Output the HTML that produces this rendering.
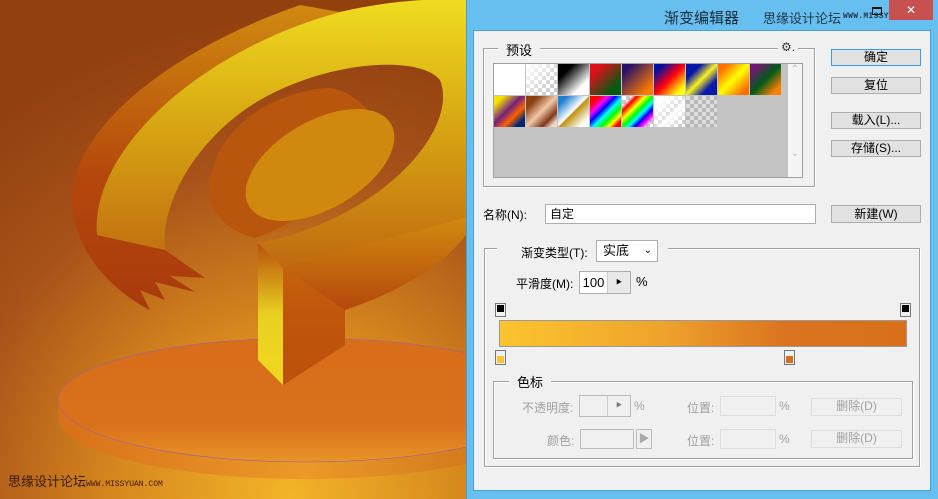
<!DOCTYPE html>
<html><head><meta charset="utf-8">
<style>
*{margin:0;padding:0;box-sizing:border-box}
body{width:938px;height:499px;overflow:hidden;position:relative;font-family:"Liberation Sans","Noto Sans CJK SC",sans-serif;font-size:12px;color:#000;background:#67bff0}
.a{position:absolute}
.btn{position:absolute;background:#e1e1e1;border:1px solid #adadad;text-align:center;line-height:15px;font-size:12px}
.grp{position:absolute;border:1px solid #a0a0a0;box-shadow:inset 1px 1px 0 #fff,1px 1px 0 #fff}
.lbl{position:absolute;background:#f0f0f0;padding:0 8px;font-size:12px}
.sw{position:absolute;width:31px;height:31px}
.chk{background-color:#fff;background-image:linear-gradient(45deg,#ccc 25%,transparent 25%,transparent 75%,#ccc 75%),linear-gradient(45deg,#ccc 25%,transparent 25%,transparent 75%,#ccc 75%);background-size:8px 8px;background-position:0 0,4px 4px}
.dis{color:#a0a0a0}
</style></head><body>
<svg class="a" style="left:0;top:0" width="466" height="499" viewBox="0 0 466 499">
<defs>
<radialGradient id="bg" cx="290" cy="500" r="480" gradientUnits="userSpaceOnUse">
<stop offset="0" stop-color="#f3b428"/><stop offset="0.35" stop-color="#d88a1e"/><stop offset="0.7" stop-color="#a8521a"/><stop offset="1" stop-color="#93400f"/></radialGradient>
<linearGradient id="ring" x1="0" y1="0" x2="0" y2="1"><stop offset="0" stop-color="#f0dc20"/><stop offset="0.45" stop-color="#d8a812"/><stop offset="1" stop-color="#c06a10"/></linearGradient>
<linearGradient id="side" x1="0" y1="0" x2="0" y2="1"><stop offset="0" stop-color="#d08a10"/><stop offset="0.55" stop-color="#b5480c"/><stop offset="1" stop-color="#a83a0c"/></linearGradient>
<linearGradient id="base" x1="0" y1="0" x2="1" y2="0"><stop offset="0" stop-color="#d8701a"/><stop offset="0.5" stop-color="#eb9a28"/><stop offset="1" stop-color="#c86a18"/></linearGradient>
<linearGradient id="btop" x1="0" y1="0" x2="0" y2="1"><stop offset="0" stop-color="#d86e1a"/><stop offset="0.7" stop-color="#d9701a"/><stop offset="1" stop-color="#e89428"/></linearGradient>
<linearGradient id="post" x1="0" y1="0" x2="0" y2="1"><stop offset="0" stop-color="#b8500c"/><stop offset="0.5" stop-color="#e8d020"/><stop offset="1" stop-color="#f0d820"/></linearGradient>
</defs>
<rect width="466" height="499" fill="url(#bg)"/>
<ellipse cx="305" cy="417" rx="247" ry="62" fill="url(#base)"/>
<rect x="58" y="400" width="408" height="17" fill="url(#base)"/>
<ellipse cx="305" cy="400" rx="247" ry="62" fill="url(#btop)" stroke="#a060a0" stroke-width="0.6"/>
<path d="M97 235 C90 150 200 50 340 12 L300 5 C170 50 68 130 72 205 C75 250 110 290 150 310 L140 290 L165 300 L155 282 L195 292 L170 276 L205 278 L165 250 Z" fill="url(#side)"/>
<path d="M282 267 L466 217 L466 235 C440 270 390 295 345 310 L345 345 L283 385 Z" fill="url(#side)"/>
<path d="M210 180 C220 120 280 92 325 88 C345 88 360 100 375 118 C360 170 310 220 255 238 C225 230 205 210 210 180 Z" fill="#b8560e"/>
<ellipse cx="320" cy="165" rx="82" ry="44" transform="rotate(-30 320 165)" fill="#d0880e"/>
<path fill-rule="evenodd" fill="url(#ring)" d="M97 235 C90 150 200 50 340 12 C390 0 440 -2 466 0 L466 217 L282 267 L258 243 C380 220 460 130 440 80 C420 55 330 60 260 100 C200 135 160 200 165 250 Z"/>
<path d="M258 243 L283 268 L283 385 L258 360 Z" fill="url(#post)"/>
<path d="M283 268 L283 385 L345 345 L345 310 Z" fill="#c8600e" opacity="0.6"/>
<text x="8" y="486" font-size="13" fill="#3a1a05" font-family="Liberation Sans,Noto Sans CJK SC,sans-serif">思缘设计论坛</text>
<text x="86" y="486" font-size="8" fill="#3a1a05" font-family="Liberation Mono,monospace">WWW.MISSYUAN.COM</text>
</svg>
<div class="a" style="left:466px;top:0;width:472px;height:499px;background:#67bff0;border-left:1px solid #4a9fd0"></div>
<div class="a" style="left:664px;top:7px;font-size:15px;color:#1a2a3a">渐变编辑器</div>
<div class="a" style="left:763px;top:8px;font-size:13px;color:#20384e">思缘设计论坛</div>
<div class="a" style="left:843px;top:12px;font-size:8px;letter-spacing:0.3px;color:#20384e;font-family:'Liberation Mono',monospace;font-weight:bold">WWW.MISSYUAN.COM</div>
<div class="a" style="left:872px;top:7px;width:10px;height:8px;border:1px solid #111;border-top-width:2px"></div>
<div class="a" style="left:889px;top:0;width:44px;height:20px;background:#c75050;color:#fff;text-align:center;font-size:12px;line-height:20px">✕</div>
<div class="a" style="left:473px;top:30px;width:458px;height:461px;background:#f0f0f0;border:1px solid #4a9fd0"></div>
<div class="grp" style="left:483px;top:48px;width:332px;height:139px"></div>
<div class="lbl" style="left:498px;top:40px;font-size:13px">预设</div>
<div class="a" style="left:778px;top:40px;background:#f0f0f0;padding:0 3px;font-size:12px;color:#333">⚙.</div>
<div class="a" style="left:493px;top:63px;width:310px;height:115px;background:#c3c3c3;border:1px solid #a0a0a0"></div>
<div class="a" style="left:788px;top:64px;width:14px;height:113px;background:#f4f4f4;color:#bbb;font-size:10px;text-align:center;line-height:12px">⌃<br><br><br><br><br><br><br>⌄</div>
<div class="sw" style="left:494px;top:64px;background:#fff"></div>
<div class="sw chk" style="left:526px;top:64px"><div style="width:100%;height:100%;background:linear-gradient(135deg,#fff,rgba(255,255,255,0) 80%)"></div></div>
<div class="sw" style="left:558px;top:64px;background:linear-gradient(135deg,#000 25%,#fff 75%)"></div>
<div class="sw" style="left:590px;top:64px;background:linear-gradient(135deg,#e0101a 20%,#005a10 80%)"></div>
<div class="sw" style="left:622px;top:64px;background:linear-gradient(135deg,#28106a 15%,#ff7a00 85%)"></div>
<div class="sw" style="left:654px;top:64px;background:linear-gradient(135deg,#0010a0 15%,#ff0010 50%,#ffff00 85%)"></div>
<div class="sw" style="left:686px;top:64px;background:linear-gradient(135deg,#0818a8 25%,#f8f020 50%,#0818a8 75%)"></div>
<div class="sw" style="left:718px;top:64px;background:linear-gradient(135deg,#ff7000 15%,#ffff00 50%,#ff7000 85%)"></div>
<div class="sw" style="left:750px;top:64px;background:linear-gradient(135deg,#701870 15%,#005a18 50%,#ff8000 85%)"></div>
<div class="sw" style="left:494px;top:96px;background:linear-gradient(135deg,#f8e000 15%,#702080 45%,#ff6000 65%,#002870 85%)"></div>
<div class="sw" style="left:526px;top:96px;background:linear-gradient(135deg,#8a4010 20%,#f0c8a8 50%,#803818 75%,#f0d8c8 90%)"></div>
<div class="sw" style="left:558px;top:96px;background:linear-gradient(135deg,#2080d0 15%,#fff 48%,#c09010 52%,#fff 85%)"></div>
<div class="sw" style="left:590px;top:96px;background:linear-gradient(135deg,#f00 15%,#f0f 30%,#00f 42%,#0ff 55%,#0f0 68%,#ff0 80%,#f00 90%)"></div>
<div class="sw chk" style="left:622px;top:96px"><div style="width:100%;height:100%;background:linear-gradient(135deg,transparent 15%,#f00 25%,#ff0 38%,#0f0 50%,#0ff 60%,#00f 70%,#f0f 80%,transparent 90%)"></div></div>
<div class="sw chk" style="left:654px;top:96px"><div style="width:100%;height:100%;background:linear-gradient(135deg,#fff 20%,rgba(255,255,255,.3) 50%,#fff 60%,transparent 90%)"></div></div>
<div class="sw chk" style="left:686px;top:96px"><div style="width:100%;height:100%;background:rgba(120,120,120,.25)"></div></div>
<div class="btn" style="left:831px;top:49px;width:90px;height:17px;border-color:#3c9be8">确定</div>
<div class="btn" style="left:831px;top:77px;width:90px;height:17px">复位</div>
<div class="btn" style="left:831px;top:112px;width:90px;height:17px">载入(L)...</div>
<div class="btn" style="left:831px;top:140px;width:90px;height:17px">存储(S)...</div>
<div class="a" style="left:483px;top:206px">名称(N):</div>
<div class="a" style="left:545px;top:204px;width:271px;height:20px;background:#fff;border:1px solid #adadad;padding-left:4px;line-height:18px">自定</div>
<div class="btn" style="left:831px;top:205px;width:90px;height:18px;line-height:16px">新建(W)</div>
<div class="grp" style="left:484px;top:248px;width:436px;height:219px"></div>
<div class="a" style="left:497px;top:240px;width:100px;height:14px;background:#f0f0f0"></div>
<div class="a" style="left:521px;top:244px">渐变类型(T):</div>
<div class="a" style="left:596px;top:240px;width:62px;height:22px;background:#fff;border:1px solid #adadad;padding-left:6px;line-height:20px;font-size:13px">实底<span style="position:absolute;right:5px;top:0;font-size:10px">⌄</span></div>
<div class="a" style="left:658px;top:240px;width:10px;height:14px;background:#f0f0f0"></div>
<div class="a" style="left:516px;top:275px">平滑度(M):</div>
<div class="a" style="left:579px;top:271px;width:52px;height:23px;background:#e8e8e8;border:1px solid #adadad"></div>
<div class="a" style="left:580px;top:272px;width:28px;height:21px;background:#fff;border-right:1px solid #ccc;text-align:center;line-height:21px;font-size:13px">100</div>
<div class="a" style="left:616px;top:277px;font-size:6px">▶</div>
<div class="a" style="left:636px;top:274px;font-size:13px">%</div>
<div class="a" style="left:495px;top:303px;width:11px;height:14px;background:#f0f0f0;border:1px solid #777"><div style="margin:1px;width:7px;height:7px;background:#000"></div></div>
<div class="a" style="left:900px;top:303px;width:11px;height:14px;background:#f0f0f0;border:1px solid #777"><div style="margin:1px;width:7px;height:7px;background:#000"></div></div>
<div class="a" style="left:499px;top:320px;width:408px;height:27px;border:1px solid #999;background:linear-gradient(90deg,#fcc430,#eea32c 40%,#da7420 70%,#d8701a)"></div>
<div class="a" style="left:495px;top:350px;width:11px;height:15px;border:1px solid #777;background:#f0f0f0"><div style="margin:5px 1px 0;width:7px;height:7px;background:#fcc430"></div></div>
<div class="a" style="left:784px;top:350px;width:11px;height:15px;border:1px solid #777;background:#f0f0f0"><div style="margin:5px 1px 0;width:7px;height:7px;background:#d8701a"></div></div>
<div class="grp" style="left:493px;top:381px;width:420px;height:78px"></div>
<div class="lbl" style="left:509px;top:372px;font-size:13px">色标</div>
<div class="a dis" style="left:522px;top:399px">不透明度:</div>
<div class="a" style="left:579px;top:395px;width:52px;height:22px;border:1px solid #bbb;background:#f0f0f0"><div style="width:28px;height:20px;border-right:1px solid #ccc"></div></div>
<div class="a" style="left:616px;top:400px;font-size:6px;color:#777">▶</div>
<div class="a dis" style="left:634px;top:399px">%</div>
<div class="a dis" style="left:687px;top:399px">位置:</div>
<div class="a" style="left:720px;top:396px;width:56px;height:20px;border:1px solid #ddd"></div>
<div class="a dis" style="left:779px;top:399px">%</div>
<div class="btn dis" style="left:811px;top:398px;width:91px;height:18px;background:#f0f0f0;border-color:#ddd">删除(D)</div>
<div class="a dis" style="left:547px;top:432px">颜色:</div>
<div class="a" style="left:580px;top:429px;width:54px;height:20px;border:1px solid #bbb"></div>
<div class="a" style="left:636px;top:429px;width:16px;height:20px;border:1px solid #bbb;color:#aaa;font-size:11px;text-align:center;line-height:18px">▶</div>
<div class="a dis" style="left:687px;top:432px">位置:</div>
<div class="a" style="left:720px;top:429px;width:56px;height:20px;border:1px solid #ddd"></div>
<div class="a dis" style="left:779px;top:432px">%</div>
<div class="btn dis" style="left:811px;top:430px;width:91px;height:18px;background:#f0f0f0;border-color:#ddd">删除(D)</div>
</body></html>
